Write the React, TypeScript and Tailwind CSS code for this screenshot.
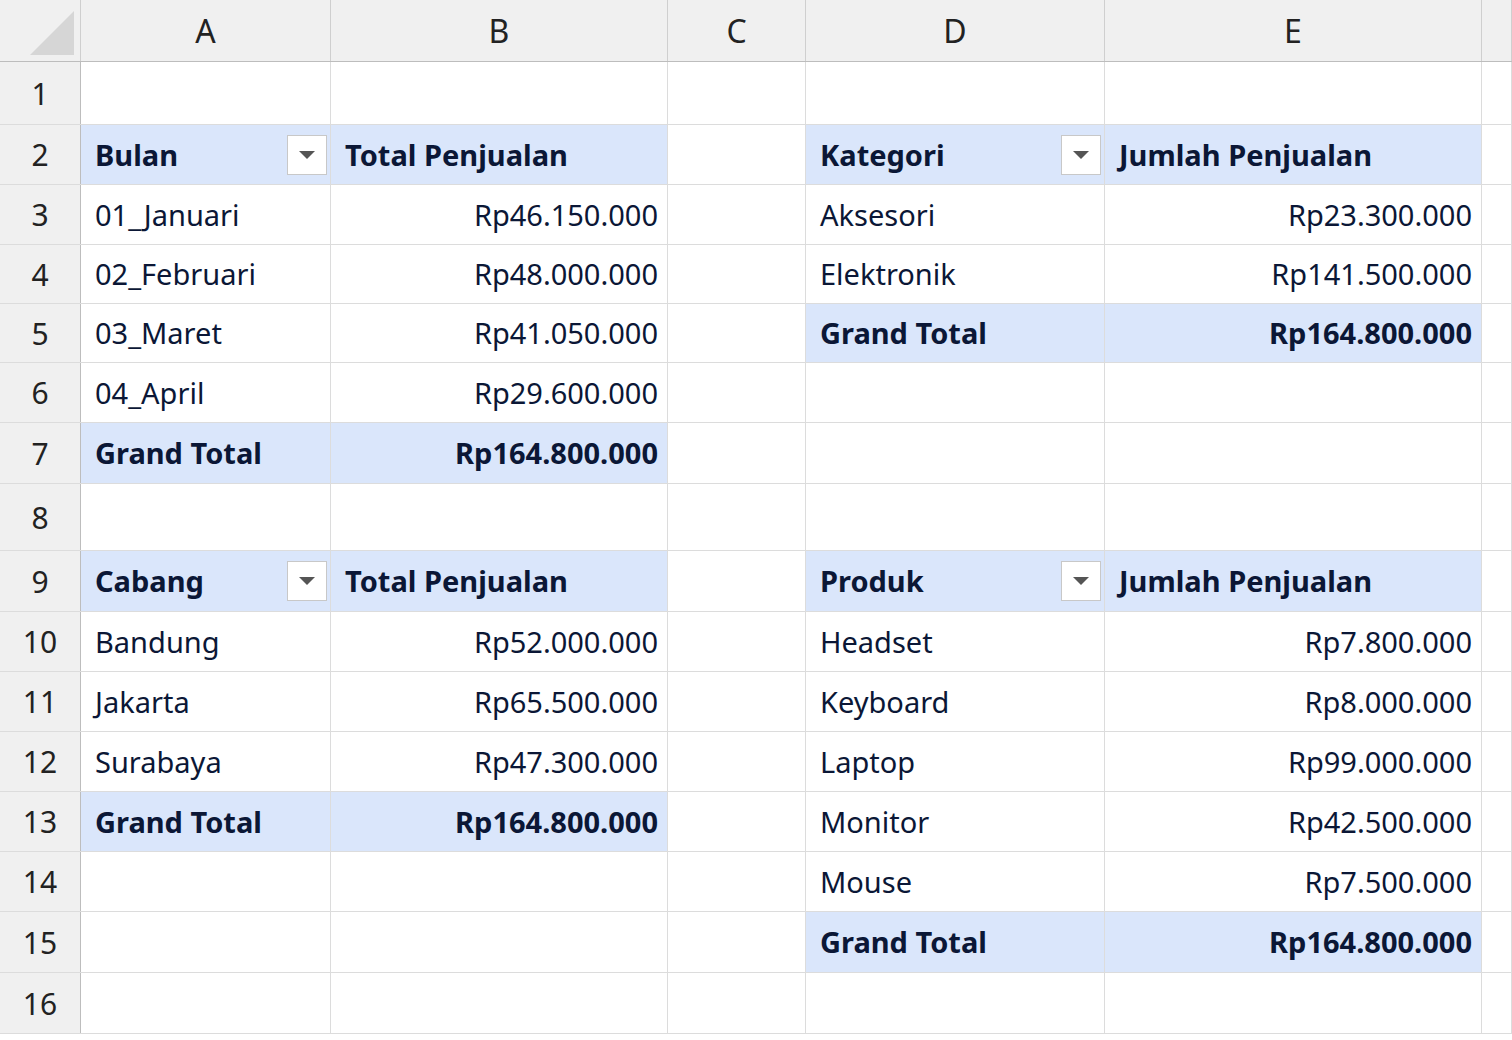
type Cell = { t?: string; kind?: "head" | "total" | "body"; right?: boolean; drop?: boolean };

const colW = [250, 337, 138, 299, 377, 40];
const colNames = ["A", "B", "C", "D", "E", ""];
const rowH = [63, 60, 60, 59, 59, 60, 61, 67, 61, 60, 60, 60, 60, 60, 61, 61];

const data: Record<string, Cell> = {
  "2-0": { t: "Bulan", kind: "head", drop: true },
  "2-1": { t: "Total Penjualan", kind: "head" },
  "3-0": { t: "01_Januari", kind: "body" },
  "3-1": { t: "Rp46.150.000", kind: "body", right: true },
  "4-0": { t: "02_Februari", kind: "body" },
  "4-1": { t: "Rp48.000.000", kind: "body", right: true },
  "5-0": { t: "03_Maret", kind: "body" },
  "5-1": { t: "Rp41.050.000", kind: "body", right: true },
  "6-0": { t: "04_April", kind: "body" },
  "6-1": { t: "Rp29.600.000", kind: "body", right: true },
  "7-0": { t: "Grand Total", kind: "total" },
  "7-1": { t: "Rp164.800.000", kind: "total", right: true },
  "9-0": { t: "Cabang", kind: "head", drop: true },
  "9-1": { t: "Total Penjualan", kind: "head" },
  "10-0": { t: "Bandung", kind: "body" },
  "10-1": { t: "Rp52.000.000", kind: "body", right: true },
  "11-0": { t: "Jakarta", kind: "body" },
  "11-1": { t: "Rp65.500.000", kind: "body", right: true },
  "12-0": { t: "Surabaya", kind: "body" },
  "12-1": { t: "Rp47.300.000", kind: "body", right: true },
  "13-0": { t: "Grand Total", kind: "total" },
  "13-1": { t: "Rp164.800.000", kind: "total", right: true },
  "2-3": { t: "Kategori", kind: "head", drop: true },
  "2-4": { t: "Jumlah Penjualan", kind: "head" },
  "3-3": { t: "Aksesori", kind: "body" },
  "3-4": { t: "Rp23.300.000", kind: "body", right: true },
  "4-3": { t: "Elektronik", kind: "body" },
  "4-4": { t: "Rp141.500.000", kind: "body", right: true },
  "5-3": { t: "Grand Total", kind: "total" },
  "5-4": { t: "Rp164.800.000", kind: "total", right: true },
  "9-3": { t: "Produk", kind: "head", drop: true },
  "9-4": { t: "Jumlah Penjualan", kind: "head" },
  "10-3": { t: "Headset", kind: "body" },
  "10-4": { t: "Rp7.800.000", kind: "body", right: true },
  "11-3": { t: "Keyboard", kind: "body" },
  "11-4": { t: "Rp8.000.000", kind: "body", right: true },
  "12-3": { t: "Laptop", kind: "body" },
  "12-4": { t: "Rp99.000.000", kind: "body", right: true },
  "13-3": { t: "Monitor", kind: "body" },
  "13-4": { t: "Rp42.500.000", kind: "body", right: true },
  "14-3": { t: "Mouse", kind: "body" },
  "14-4": { t: "Rp7.500.000", kind: "body", right: true },
  "15-3": { t: "Grand Total", kind: "total" },
  "15-4": { t: "Rp164.800.000", kind: "total", right: true },
};

function DropButton() {
  return (
    <div className="absolute right-[3px] top-1/2 -translate-y-1/2 w-[40px] h-[40px] bg-white border border-[#c8c8c8] flex items-center justify-center">
      <div className="w-0 h-0 border-l-[8px] border-r-[8px] border-t-[8px] border-l-transparent border-r-transparent border-t-[#555]" />
    </div>
  );
}

export default function App() {
  return (
    <div className="w-[1512px] h-[1040px] overflow-hidden bg-white text-[#0b1736]" style={{ fontFamily: '"Noto Sans", "Open Sans", sans-serif' }}>
      <div className="flex h-[62px] bg-[#f0f0f0] border-b border-[#bdbdbd]">
        <div className="w-[81px] shrink-0 border-r border-[#cfcfcf] relative">
          <div className="absolute right-[6px] bottom-[6px] w-0 h-0 border-l-[44px] border-t-[44px] border-l-transparent border-t-transparent border-b-0 border-r-0" style={{ borderBottom: "44px solid #d6d6d6", borderLeft: "44px solid transparent", borderTop: "0" }} />
        </div>
        {colW.map((w, i) => (
          <div key={i} style={{ width: i === 5 ? undefined : w }} className={`${i === 5 ? "flex-1" : "shrink-0"} border-r border-[#cfcfcf] flex items-center justify-center text-[32px] text-[#222]`}>
            {colNames[i]}
          </div>
        ))}
      </div>
      {rowH.map((h, r) => {
        const row = r + 1;
        return (
          <div key={row} className="flex border-b border-[#dcdcdc]" style={{ height: h }}>
            <div className="w-[81px] shrink-0 bg-[#f0f0f0] border-r border-[#bdbdbd] flex items-center justify-center text-[30px] text-[#222]">
              {row}
            </div>
            {colW.map((w, c) => {
              const cell = data[`${row}-${c}`];
              const pivot = cell && cell.kind !== "body";
              return (
                <div
                  key={c}
                  style={{ width: c === 5 ? undefined : w }}
                  className={`${c === 5 ? "flex-1" : "shrink-0"} relative border-r border-[#dcdcdc] flex items-center ${pivot ? "bg-[#dae6fb]" : ""} ${cell?.right ? "justify-end pr-[9px]" : "pl-[14px]"} text-[29px] ${pivot ? "font-bold" : ""} whitespace-nowrap`}
                >
                  {cell?.t}
                  {cell?.drop && <DropButton />}
                </div>
              );
            })}
          </div>
        );
      })}
    </div>
  );
}
